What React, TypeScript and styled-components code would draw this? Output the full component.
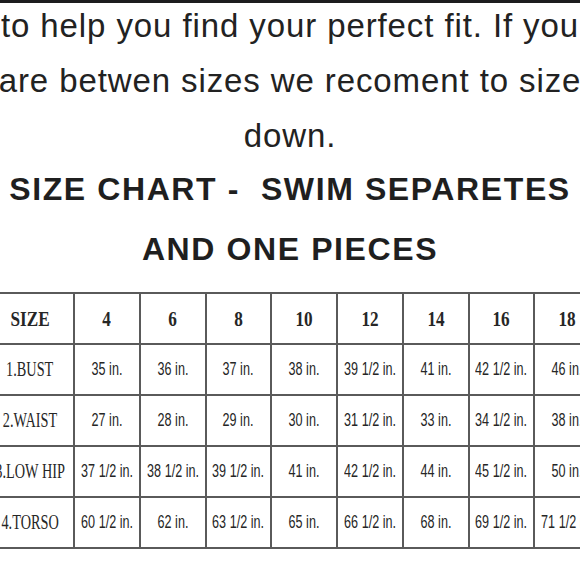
import styled, { createGlobalStyle } from "styled-components";

const GlobalStyle = createGlobalStyle`
  body {
    margin: 0;
    background: #ffffff;
    font-family: "Liberation Sans", Arial, sans-serif;
    color: #222222;
  }
`;

const sizes = ["4", "6", "8", "10", "12", "14", "16", "18"];

const rows = [
  {
    label: "1.BUST",
    values: ["35 in.", "36 in.", "37 in.", "38 in.", "39 1/2 in.", "41 in.", "42 1/2 in.", "46 in."],
  },
  {
    label: "2.WAIST",
    values: ["27 in.", "28 in.", "29 in.", "30 in.", "31 1/2 in.", "33 in.", "34 1/2 in.", "38 in."],
  },
  {
    label: "3.LOW HIP",
    values: ["37 1/2 in.", "38 1/2 in.", "39 1/2 in.", "41 in.", "42 1/2 in.", "44 in.", "45 1/2 in.", "50 in."],
  },
  {
    label: "4.TORSO",
    values: ["60 1/2 in.", "62 in.", "63 1/2 in.", "65 in.", "66 1/2 in.", "68 in.", "69 1/2 in.", "71 1/2 in."],
  },
];

const App = () => {
  return (
    <Pagina>
      <GlobalStyle />
      <BarraSuperior />
      <Intro>
        <Linea>to help you find your perfect fit. If you</Linea>
        <Linea>are betwen sizes we recoment to size</Linea>
        <Linea>down.</Linea>
      </Intro>
      <Titulo>
        <Linea>SIZE CHART -&nbsp; SWIM SEPARETES</Linea>
        <Linea>AND ONE PIECES</Linea>
      </Titulo>
      <Tabla>
        <Celda>
          <Texto $tipo="cabecera">SIZE</Texto>
        </Celda>
        {sizes.map((s) => (
          <Celda key={s}>
            <Texto $tipo="cabecera">{s}</Texto>
          </Celda>
        ))}
        {rows.map((r) => (
          <Fila key={r.label}>
            <Celda>
              <Texto $tipo="etiqueta">{r.label}</Texto>
            </Celda>
            {r.values.map((v, i) => (
              <Celda key={i}>
                <Texto $tipo="dato">{v}</Texto>
              </Celda>
            ))}
          </Fila>
        ))}
      </Tabla>
    </Pagina>
  );
};
export default App;

const Pagina = styled.div`
  width: 580px;
  height: 580px;
  overflow: hidden;
  background: #ffffff;
`;

const BarraSuperior = styled.div`
  height: 3px;
  background-color: #1c1c1e;
`;

const Intro = styled.div`
  display: flex;
  flex-direction: column;
  align-items: center;
  margin-top: -5px;
  font-size: 33px;
  letter-spacing: 0.9px;
  line-height: 55px;
  color: #222222;
`;

const Linea = styled.div`
  white-space: nowrap;
`;

const Titulo = styled.div`
  display: flex;
  flex-direction: column;
  align-items: center;
  margin-top: -4px;
  font-size: 32px;
  font-weight: 700;
  letter-spacing: 1.6px;
  line-height: 60px;
  color: #1f1f1f;
`;

const Tabla = styled.div`
  display: grid;
  grid-template-columns: 86px repeat(8, 63.75px);
  grid-auto-rows: 49px;
  gap: 2px;
  padding: 2px;
  width: max-content;
  margin-top: 13px;
  margin-left: -15px;
  background-color: #5a5a5a;
`;

const Fila = styled.div`
  display: contents;
`;

const Celda = styled.div`
  display: flex;
  align-items: center;
  justify-content: center;
  background-color: #ffffff;
`;

const Texto = styled.span<{ $tipo: "cabecera" | "etiqueta" | "dato" }>`
  display: inline-block;
  white-space: nowrap;
  font-family: ${(p) =>
    p.$tipo === "dato"
      ? `"Liberation Sans", Arial, sans-serif`
      : `"Liberation Serif", "Times New Roman", serif`};
  font-size: ${(p) => (p.$tipo === "dato" ? "18px" : p.$tipo === "cabecera" ? "22px" : "21px")};
  font-weight: ${(p) => (p.$tipo === "cabecera" ? 700 : 400)};
  color: #262626;
  transform: scaleX(
    ${(p) => (p.$tipo === "cabecera" ? 0.78 : p.$tipo === "etiqueta" ? 0.68 : 0.7)}
  );
`;
